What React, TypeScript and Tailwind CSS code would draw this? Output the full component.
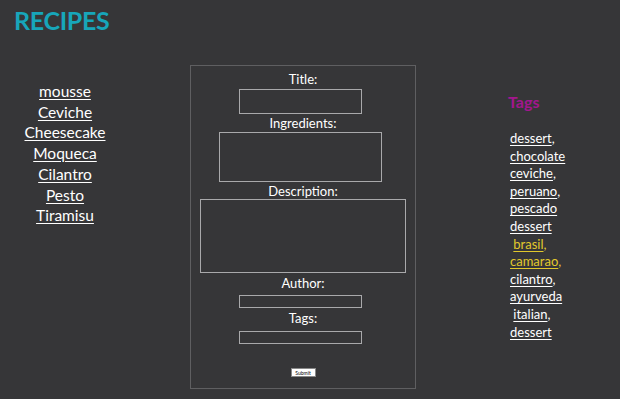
import React from "react"

const recipes = ["mousse", "Ceviche", "Cheesecake", "Moqueca", "Cilantro", "Pesto", "Tiramisu"]

type Tag = { name: string; comma: boolean; lead?: boolean; yellow?: boolean }

const tags: Tag[] = [
  { name: "dessert", comma: true },
  { name: "chocolate", comma: false },
  { name: "ceviche", comma: true },
  { name: "peruano", comma: true },
  { name: "pescado", comma: false },
  { name: "dessert", comma: false },
  { name: "brasil", comma: true, lead: true, yellow: true },
  { name: "camarao", comma: true, yellow: true },
  { name: "cilantro", comma: true },
  { name: "ayurveda", comma: false },
  { name: "italian", comma: true, lead: true },
  { name: "dessert", comma: false },
]

export default function App() {
  return (
    <div
      className="w-[620px] h-[399px] overflow-hidden bg-[#363638] text-white"
      style={{ fontFamily: "Lato, 'Open Sans', sans-serif" }}
    >
      <h1 className="pl-[14px] pt-[5px] text-[25px] leading-[30px] font-bold text-[#17a6ba] tracking-[-0.3px]">
        RECIPES
      </h1>

      <div className="flex items-start mt-[30px]">
        {/* recipe list */}
        <ul className="w-[130px] mt-[16px] flex flex-col items-center text-[15.5px] leading-[20.7px]">
          {recipes.map((r) => (
            <li key={r}>
              <a href="#" className="underline underline-offset-2 decoration-1">
                {r}
              </a>
            </li>
          ))}
        </ul>

        {/* form */}
        <form
          className="ml-[60px] w-[226px] border border-[#5f5f61] flex flex-col items-center pt-[5px] pb-[11px] text-[13px] leading-[16px]"
          onSubmit={(e) => e.preventDefault()}
        >
          <label>Title:</label>
          <input className="mt-[2px] mr-[6px] w-[123px] h-[25px] border border-[#a9a9ab] bg-transparent" />
          <label className="mt-[1px]">Ingredients:</label>
          <textarea className="mt-[1px] mr-[6px] w-[163px] h-[50px] border border-[#a9a9ab] bg-transparent resize-none" />
          <label className="mt-[1px]">Description:</label>
          <textarea className="w-[206px] h-[74px] border border-[#a9a9ab] bg-transparent resize-none" />
          <label className="mt-[2px]">Author:</label>
          <input className="mt-[4px] mr-[6px] w-[123px] h-[13px] border border-[#a9a9ab] bg-transparent" />
          <label className="mt-[2px]">Tags:</label>
          <input className="mt-[5px] mr-[6px] w-[123px] h-[13px] border border-[#a9a9ab] bg-transparent" />
          <button
            type="submit"
            className="mt-[24px] w-[25px] h-[9px] bg-white text-black text-[5px] leading-[9px] border border-[#888]"
          >
            Submit
          </button>
        </form>

        {/* tags */}
        <div className="ml-[92px] mt-[27px]">
          <h2 className="text-[16px] leading-[20px] font-bold text-[#a3168e]">Tags</h2>
          <ul className="mt-[18px] ml-[2px] text-[13px] leading-[17.6px]">
            {tags.map((t, i) => (
              <li key={i} className={t.yellow ? "text-[#e2c82c]" : "text-white"}>
                {t.lead ? "\u00a0" : ""}
                <a href="#" className="underline underline-offset-2 decoration-1">
                  {t.name}
                </a>
                {t.comma ? "," : ""}
              </li>
            ))}
          </ul>
        </div>
      </div>
    </div>
  )
}
